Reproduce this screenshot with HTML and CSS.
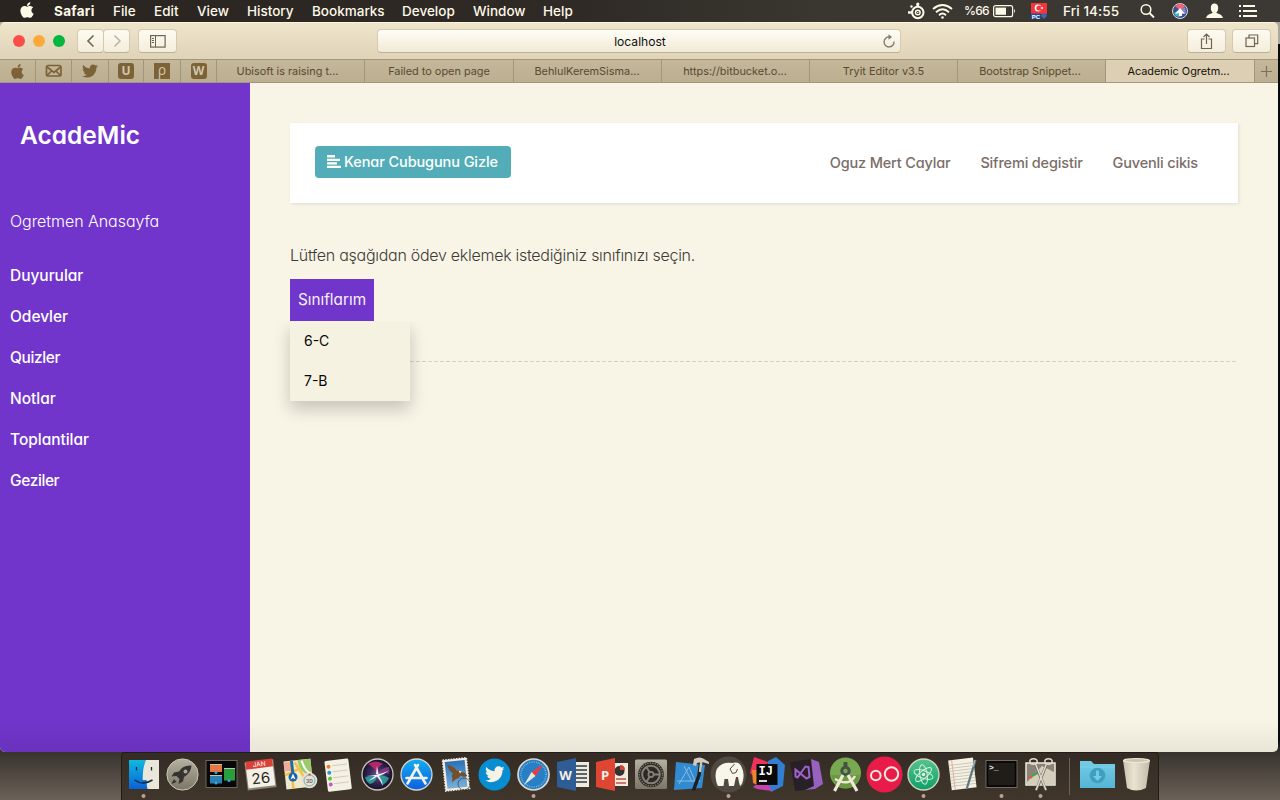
FILE: index.html
```
<!DOCTYPE html>
<html lang="tr">
<head>
<meta charset="utf-8">
<title>Academic Ogretmen</title>
<link rel="stylesheet" href="styles.css">
</head>
<body>
<svg class="defs" width="0" height="0">
  <symbol id="apple" viewBox="0 0 384 512"><path d="M318.7 268.7c-.2-36.7 16.4-64.4 50-84.8-18.8-26.9-47.2-41.7-84.7-44.6-35.5-2.8-74.3 20.7-88.5 20.7-15 0-49.4-19.7-76.4-19.7C63.3 141.2 4 184.8 4 273.5q0 39.3 14.4 81.2c12.8 36.7 59 126.7 107.2 125.2 25.2-.6 43-17.9 75.8-17.9 31.8 0 48.3 17.9 76.4 17.9 48.6-.7 90.4-82.5 102.6-119.3-65.2-30.7-61.7-90-61.7-91.9zm-56.6-164.2c27.3-32.4 24.8-61.9 24-72.5-24.1 1.4-52 16.4-67.9 34.9-17.5 19.8-27.8 44.3-25.6 71.9 26.1 2 49.9-11.4 69.5-34.3z"/></symbol>
  <symbol id="bird" viewBox="0 0 512 512"><path d="M459.37 151.716c.325 4.548.325 9.097.325 13.645 0 138.72-105.583 298.558-298.558 298.558-59.452 0-114.68-17.219-161.137-47.106 8.447.974 16.568 1.299 25.34 1.299 49.055 0 94.213-16.568 130.274-44.832-46.132-.975-84.792-31.188-98.112-72.772 6.498.974 12.995 1.624 19.818 1.624 9.421 0 18.843-1.3 27.614-3.573-48.081-9.747-84.143-51.98-84.143-102.985v-1.299c13.969 7.797 30.214 12.67 47.431 13.319-28.264-18.843-46.781-51.005-46.781-87.391 0-19.492 5.197-37.36 14.294-52.954 51.655 63.675 129.3 105.258 216.365 109.807-1.624-7.797-2.599-15.918-2.599-24.04 0-57.828 46.782-104.934 104.934-104.934 30.213 0 57.502 12.67 76.67 33.137 23.715-4.548 46.456-13.32 66.599-25.34-7.798 24.366-24.366 44.833-46.132 57.827 21.117-2.273 41.584-8.122 60.426-16.243-14.292 20.791-32.161 39.308-52.628 54.253z"/></symbol>
  <defs>
    <linearGradient id="gFinder" x1="0" y1="0" x2="0" y2="1"><stop offset="0" stop-color="#10b9e0"/><stop offset="1" stop-color="#0a62d6"/></linearGradient>
    <linearGradient id="gGray" x1="0" y1="0" x2="0" y2="1"><stop offset="0" stop-color="#b3b1a1"/><stop offset="1" stop-color="#7d7565"/></linearGradient>
    <linearGradient id="gBlue" x1="0" y1="0" x2="0" y2="1"><stop offset="0" stop-color="#12aef0"/><stop offset="1" stop-color="#0b5fe0"/></linearGradient>
    <linearGradient id="gSky" x1="0" y1="0" x2="0" y2="1"><stop offset="0" stop-color="#2a70b8"/><stop offset="1" stop-color="#79afd9"/></linearGradient>
    <linearGradient id="gAtom" x1="0" y1="0" x2="0" y2="1"><stop offset="0" stop-color="#55c58d"/><stop offset="1" stop-color="#0b9f68"/></linearGradient>
    <linearGradient id="gTrash" x1="0" y1="0" x2="1" y2="0"><stop offset="0" stop-color="#c9c1ae"/><stop offset=".4" stop-color="#eae3d2"/><stop offset="1" stop-color="#c3bba8"/></linearGradient>
    <linearGradient id="gFolder" x1="0" y1="0" x2="0" y2="1"><stop offset="0" stop-color="#74cce5"/><stop offset="1" stop-color="#55b5d5"/></linearGradient>
    <radialGradient id="gSiri"><stop offset="0" stop-color="#6a5a9a"/><stop offset=".5" stop-color="#3a2858"/><stop offset="1" stop-color="#12122a"/></radialGradient>
  </defs>
</svg>

<header class="menubar">
  <svg class="i-apple" width="14" height="18" fill="#fdf9e8"><use href="#apple"/></svg>
  <b>Safari</b><span>File</span><span>Edit</span><span>View</span><span>History</span><span>Bookmarks</span><span>Develop</span><span>Window</span><span>Help</span>
  <svg width="18" height="18" viewBox="0 0 18 18" fill="none" stroke="#fdf9e8"><circle cx="9.800" cy="10.500" r="5.700" stroke-width="2"/><circle cx="9.800" cy="10.500" r="2.300" stroke-width="1.500"/><path d="M9.800 5V2.500M0 10.500h4" stroke-width="2.600"/><circle cx="9.800" cy="2" r="1.600" fill="#fdf9e8" stroke="none"/><circle cx="3.500" cy="4.500" r="1.200" fill="#fdf9e8" stroke="none"/><circle cx="9.800" cy="10.500" r=".7" fill="#fdf9e8" stroke="none"/></svg>
  <svg width="22" height="17" viewBox="0 0 22 17" fill="none" stroke="#fdf9e8" stroke-width="1.900"><path d="M1 6Q10.500-1.800 20 6M4 9.200Q10.500 3.400 17 9.200M7 12.200Q10.500 9 14 12.200"/><circle cx="10.500" cy="14.500" r="1.300" fill="#fdf9e8" stroke="none"/></svg>
  <span class="pct">%66</span>
  <svg width="24" height="13" viewBox="0 0 24 13"><rect x=".6" y=".7" width="19" height="11" rx="2" fill="none" stroke="#fdf9e8" stroke-width="1.200"/><rect x="2.500" y="2.600" width="10.500" height="7.200" fill="#fdf9e8"/><path d="M21 4q2 2 0 4z" fill="#fdf9e8"/></svg>
  <svg width="17" height="18" viewBox="0 0 17 18"><rect y="1" width="16" height="11" fill="#f7333b"/><circle cx="7" cy="6" r="3.400" fill="#fff"/><circle cx="8" cy="6" r="2.600" fill="#f7333b"/><path d="M9 6l3-1v2z" fill="#fff"/><rect y="11.500" width="9.500" height="5.500" fill="#214f9e"/><text class="pc" x=".8" y="16.600">PC</text><path d="M13 10.500l3.200 3.200L13 17l-3.200-3.300z" fill="#3f69b2"/></svg>
  <span class="clock">Fri 14:55</span>
  <svg width="15" height="16" viewBox="0 0 15 16" fill="none" stroke="#fdf9e8" stroke-width="1.500"><circle cx="6" cy="6.500" r="4.800"/><path d="M9.500 10L14 14.500" stroke-width="1.800"/></svg>
  <svg width="17" height="18" viewBox="0 0 17 18"><circle cx="8" cy="9" r="7.500" fill="#39508c" stroke="#ddd8d0"/><path d="M3 4q5-5 10 0L9 9z" fill="#ec6677"/><path d="M2 11l6-4v8q-5 0-6-4z" fill="#3bb9c5"/><path d="M13 5l-5 4 6 3z" fill="#7a8de0"/><path d="M8 6l5 6-3-.5V14H7v-3l-4 1z" fill="#fff"/></svg>
  <svg width="18" height="16" viewBox="0 0 18 16" fill="#fdf9e8"><ellipse cx="8.500" cy="5" rx="3.700" ry="4.500"/><path d="M6.500 8h4v2q6 1.500 6.500 5H0q.5-3.500 6.500-5z"/></svg>
  <svg width="19" height="12" viewBox="0 0 19 12" stroke="#fdf9e8" stroke-width="2"><path d="M0 1h2M4 1h12M0 6h2M4 6h14M0 11h2M4 11h14"/></svg>
</header>

<div class="window">
  <div class="toolbar">
    <div class="lights"><i class="red"></i><i class="amber"></i><i class="green"></i></div>
    <div class="nav">
      <button><svg width="10" height="14" fill="none" stroke="#6e6552" stroke-width="1.600"><path d="M7.500 1.500L2 7l5.500 5.500"/></svg></button><button><svg width="10" height="14" fill="none" stroke="#bdb6a4" stroke-width="1.600"><path d="M2.500 1.500L8 7l-5.500 5.500"/></svg></button>
    </div>
    <button class="wide"><svg width="16" height="13" fill="none" stroke="#6e6552"><rect x=".6" y=".6" width="14.500" height="11.500" stroke-width="1.200"/><path d="M5.500 1v11M2 3.500h2M2 5.500h2M2 7.500h2"/></svg></button>
    <div class="url"><span>localhost</span><svg width="14" height="15" fill="none" stroke="#807a6c" stroke-width="1.300"><path d="M7.500 3A5 5 0 1 0 12 7.500"/><path d="M6.500.3L10 3 6.500 5.700z" fill="#807a6c" stroke="none"/></svg></div>
    <button class="wide share"><svg width="14" height="17" fill="none" stroke="#6e6552" stroke-width="1.200"><path d="M4.500 6H1.500v9.500h10V6h-3M6.500 11V1.500M3.500 4l3-3 3 3"/></svg></button>
    <button class="wide"><svg width="14" height="14" fill="none" stroke="#6e6552" stroke-width="1.200"><rect x="1" y="4" width="8.500" height="8.500"/><path d="M4 4V1h8.700v8.700h-3"/></svg></button>
  </div>
  <div class="tabs">
    <span><svg width="13" height="17" fill="#7c6237"><use href="#apple"/></svg></span>
    <span><svg width="18" height="14" fill="none" stroke="#7c6237" stroke-width="1.700"><rect x="1.500" y="1.500" width="14.500" height="10.500" rx="1.800"/><path d="M2 3l7 5.500L15.500 3M2 11.500l5-5M15.500 11.500l-5-5"/></svg></span>
    <span><svg width="16" height="16" fill="#7c6237"><use href="#bird"/></svg></span>
    <span><b class="mark">U</b></span>
    <span><b class="mark square">ρ</b></span>
    <span><b class="mark">W</b></span>
    <span class="first">Ubisoft is raising t...</span>
    <span>Failed to open page</span>
    <span class="mid">BehlulKeremSisma...</span>
    <span class="mid">https://bitbucket.o...</span>
    <span>Tryit Editor v3.5</span>
    <span class="shift">Bootstrap Snippet...</span>
    <span class="active shift">Academic Ogretm...</span>
    <span><svg width="11" height="11" stroke="#7d705a" stroke-width="1.200"><path d="M5.500 0v11M0 5.500h11"/></svg></span>
  </div>
  <div class="page">
    <nav class="sidebar">
      <h1>AcadeMic</h1>
      <p>Ogretmen Anasayfa</p>
      <ul><li>Duyurular</li><li>Odevler</li><li class="tight">Quizler</li><li>Notlar</li><li>Toplantilar</li><li class="tight">Geziler</li></ul>
    </nav>
    <main>
      <div class="navbar">
        <button class="toggle"><svg width="14" height="14" fill="#fff"><path d="M0 0h8v2.500H0zM0 3.700h13v2.300H0zM0 7.200h10v2.300H0zM0 10.700h14V13H0z"/></svg><span>Kenar Cubugunu Gizle</span></button>
        <div class="links"><a>Oguz Mert Caylar</a><a>Sifremi degistir</a><a>Guvenli cikis</a></div>
      </div>
      <p class="lead">Lütfen aşağıdan ödev eklemek istediğiniz sınıfınızı seçin.</p>
      <div class="dropdown">
        <button class="drop"><span>Sınıflarım</span></button>
        <div class="menu"><a>6-C</a><a>7-B</a></div>
      </div>
      <div class="line"></div>
    </main>
  </div>
</div>

<footer class="dock">
  <svg viewBox="0 0 39 48"><rect x="5" y="8" width="30" height="29" fill="url(#gFinder)"/><path d="M22 8h13v29H23.500q-1-4-.8-9h-4Q18.500 16 22 8z" fill="#e9e6da"/><path d="M12.500 15v3.500M27.500 15v3.500" stroke="#172b3c" stroke-width="1.300"/><path d="M10.500 28q8.500 6 18 0" fill="none" stroke="#172b3c" stroke-width="1.500"/><circle class="dot" cx="19.500" cy="44" r="2"/></svg>
  <svg viewBox="0 0 39 48"><circle cx="19.500" cy="22.500" r="15.600" fill="url(#gGray)" stroke="#ccc8ba"/><path d="M28.500 13.500q-9-.5-12.500 6l-5 1-2.500 4 5-.5 3 3-1 5 4.500-2.500 1-4.500q7-4 7.500-11.500zM11 27l-2.500 5 5-2z" fill="#35332f"/><circle cx="22.500" cy="19.500" r="2" fill="#aaa798"/></svg>
  <svg viewBox="0 0 39 48"><rect x="4" y="8.500" width="31" height="27" fill="#080808" stroke="#6c665b"/><path d="M8 12h12v8H8z" fill="#e6793f"/><path d="M8 23h12v8.500H8z" fill="#2d7fb0"/><path d="M22 16h11v12.500H22z" fill="#2a9d3c"/><path d="M8 12h12v1H8zM8 23h12v1H8zM22 16h11v1H22z" fill="#bcc7ac"/><g fill="#3b9eea"><circle cx="14" cy="20.500" r="1.500"/><circle cx="14" cy="31" r="1.500"/><circle cx="27" cy="28.500" r="1.500"/></g></svg>
  <svg viewBox="0 0 39 48"><g transform="rotate(-7 19 23)"><rect x="5" y="9" width="29" height="28" fill="#8a8477"/><rect x="6" y="9" width="27" height="26" fill="#f3f0e5"/><rect x="6" y="8" width="27" height="8" fill="#d94138"/><text class="cal-m" x="19.500" y="14.500">JAN</text><text class="cal-d" x="19.500" y="31.500">26</text></g></svg>
  <svg viewBox="0 0 39 48"><g transform="rotate(-6 19 23)"><rect x="5" y="8" width="27" height="28" fill="#eee8cc"/><path d="M19 8h13v17Q19 22 19 8z" fill="#9ccb6c"/><path d="M5 9h7v9H5z" fill="#efac9a"/><path d="M12 8v28M16 10l12 24M5 22l14-5" stroke="#f2c146" stroke-width="2.500"/><path d="M13 8v14" stroke="#2668aa" stroke-width="3"/><path d="M23 9q3 13 9 14" stroke="#fff" stroke-width="2" fill="none"/></g><circle cx="13" cy="25" r="4.500" fill="#1765b0"/><path d="M13 21.500l2.500 6-2.500-1.500-2.500 1.500z" fill="#fff"/><circle cx="29.500" cy="28.500" r="7.800" fill="#e5e2d8"/><circle cx="29.500" cy="28.500" r="5.500" fill="none" stroke="#86a4a5"/><text class="tiny" x="29.500" y="30.500">3D</text><circle cx="29.500" cy="22.500" r="1.100" fill="#f13434"/></svg>
  <svg viewBox="0 0 39 48"><g transform="rotate(-7 20 22)"><rect x="7" y="7.500" width="24" height="31" rx="1.500" fill="#f4f0e2"/><path d="M14 13h15M14 19h15M14 25h15M14 31h15" stroke="#cac5b8" stroke-width=".8"/><circle cx="10.500" cy="13.500" r="2" fill="#f27830"/><circle cx="10.500" cy="19.500" r="2" fill="#2595dc"/><circle cx="10.500" cy="25.500" r="2" fill="#5ac83b"/><circle cx="10.500" cy="31.500" r="2" fill="#c35ac8"/></g></svg>
  <svg viewBox="0 0 39 48"><circle cx="19.500" cy="22.500" r="15.500" fill="url(#gSiri)" stroke="#cdc5bb" stroke-width="1.300"/><path d="M10 12q8-5 15 0-6 2-6 10-2-6-9-10z" fill="#c72a6e" opacity=".85"/><path d="M20 22q4-7 11-7 1 4 0 7-5-2-11 0z" fill="#8e3d8c" opacity=".8"/><path d="M7 25q7-2 12-2-1 8-7 9-4-2-5-7zM19 23q8 0 12 3-2 5-7 7-2-6-5-10z" fill="#2fb9ae" opacity=".75"/><path d="M8 23q6 1 11-.5 6-1 12-4-5 4-10 5.500 3 4 4 10-3-6-6-9.500-4 3-9 4.500 5-3 7-5-5 0-9-1zM18 22l1-8 1.500 8z" fill="#f5f1f6"/></svg>
  <svg viewBox="0 0 39 48"><circle cx="19.500" cy="22.500" r="15.500" fill="url(#gBlue)" stroke="#d6d5cc" stroke-width="1.300"/><path d="M21 13l-9 16M18 13l9 16M9.500 26h14M25.500 26h4M27 29l1.500 2.500M12 29l-1.500 2.500" fill="none" stroke="#f3f0e6" stroke-width="2.600" stroke-linecap="round"/></svg>
  <svg viewBox="0 0 39 48"><g transform="rotate(-6 19 22)"><rect x="8" y="7" width="24" height="31" fill="#f2eddf" stroke="#f2eddf" stroke-width="1.500" stroke-dasharray="1.500 1.200"/><rect x="10" y="9" width="20" height="27" fill="url(#gSky)"/><path d="M12 12q7 2 9 7 4-1 5 2 3 0 5 4-3 2-7-1-1 3-4 3l-5 3 1-4q-1-3 1-5-4-3-5-9z" fill="#73502b"/><path d="M23 19l3 1-2 2z" fill="#f3ead4"/></g><circle cx="28" cy="32" r="6" fill="none" stroke="#3339" stroke-width="1"/></svg>
  <svg viewBox="0 0 39 48"><circle cx="19.500" cy="22.500" r="16" fill="#088dd2"/><svg x="10" y="12.500" width="19.500" height="19.500" fill="#f6f2e6"><use href="#bird"/></svg></svg>
  <svg viewBox="0 0 39 48"><circle cx="19.500" cy="22.500" r="15.500" fill="#287fc6" stroke="#dcd8cb" stroke-width="1.700"/><circle cx="19.500" cy="22.500" r="12.500" fill="none" stroke="#8cc8e7" stroke-width="1.500" stroke-dasharray=".6 1.200"/><path d="M29.500 12l-8 12-4-4z" fill="#ee3b39"/><path d="M10 33l7.500-13 4 4z" fill="#e8e5dd"/><circle class="dot" cx="19.500" cy="44" r="2"/></svg>
  <svg viewBox="0 0 39 48"><rect x="20" y="10" width="16" height="25" fill="#eeeadd"/><path d="M23 14h11M23 18h11M23 22h11M23 26h11M23 30h11" stroke="#2d3947" stroke-width="1.500"/><path d="M4 10l19-4v33L4 35z" fill="#2e5c94"/><text class="office" x="12.500" y="27.500">W</text></svg>
  <svg viewBox="0 0 39 48"><rect x="20" y="11" width="16" height="23" fill="#eeeadd"/><circle cx="27.500" cy="19" r="5" fill="#333"/><path d="M28 18v-5q5 0 5 5z" fill="#d24532"/><path d="M24 27h10M24 31h10" stroke="#bd5546" stroke-width="1.500"/><path d="M4 10l19-4v33L4 35z" fill="#de4633"/><text class="office" x="13" y="27.500">P</text></svg>
  <svg viewBox="0 0 39 48"><rect x="4" y="7.500" width="32" height="29.500" rx="1.500" fill="url(#gGray)"/><circle cx="20" cy="22.500" r="12.800" fill="#2b2926"/><circle cx="20" cy="22.500" r="8.800" fill="none" stroke="#888173" stroke-width="2"/><circle cx="20" cy="22.500" r="11.500" fill="none" stroke="#888173" stroke-width="1.300" stroke-dasharray="1.300 1.200"/><circle cx="20" cy="22.500" r="2.600" fill="none" stroke="#888173" stroke-width="1.800"/><path d="M23 22.500h6M18.500 20l-3.500-5.500M18.500 25l-3.500 5.500" stroke="#888173" stroke-width="2"/></svg>
  <svg viewBox="0 0 39 48"><path d="M6 10l29 3-3 23-28 2z" fill="#328bd0"/><path d="M9 32l10-17 8 19M7 29h23M14 14l8 16" stroke="#88bddd" stroke-width="1" fill="none"/><path d="M30.500 12L29 23l-5 14" fill="none" stroke="#1d2021" stroke-width="3.500" stroke-linecap="round"/><path d="M31.500 8l-1.500 12" stroke="#c9c6ba" stroke-width="2.500"/><path d="M24 7q6-3 10 0l5 3v2l-7-2-5 1-1 3-3-1z" fill="#d1cec1"/></svg>
  <svg viewBox="0 0 39 48"><circle cx="19.500" cy="22.500" r="18" fill="#504941"/><path d="M6.500 24q0-9 7-12 4-2 10-1 7-2 9.500 5 2 4 1.500 9-.5 7-3.500 9-1.500-5-2-9h-2l-2 9h-5l-1-7-3.500 0-1 7h-5.500q-2-3-2.500-10z" fill="#f8f5eb"/><path d="M25.500 12l-4.500 5 2.500 4.500 3.500-1 1.500-3.500" fill="none" stroke="#504941" stroke-width="1"/><circle class="dot" cx="19.500" cy="44" r="2"/></svg>
  <svg viewBox="0 0 39 48"><path d="M6 5l14 5-8 20-10-9z" fill="#ef315b"/><path d="M4 18h10v17l-9-4z" fill="#ed8433"/><path d="M20 9l8-4 9 8-2 21-12 6-5-10z" fill="#327ed0"/><path d="M5 35l10-8 10 12-16-2z" fill="#c743ad"/><rect x="8.500" y="12" width="21" height="21" fill="#090909"/><text class="ij" x="10.500" y="23">IJ</text><path d="M11 29h8" stroke="#fff" stroke-width="1.700"/></svg>
  <svg viewBox="0 0 39 48"><path d="M3 10l21-3 4 30-20 2z" fill="#272127"/><path d="M24 7l8 3 4 22-8 5-10 1 9-4z" fill="#9761bf"/><path d="M8.500 17.500l11 9 3-1.500-1-10-3-.5-8 11-2-1z" fill="none" stroke="#a660ce" stroke-width="2"/></svg>
  <svg viewBox="0 0 39 48"><circle cx="19.500" cy="21" r="15.500" fill="#78a950"/><path d="M5 23h29q-2 11-14.500 13.500Q7 34 5 23z" fill="#699a42"/><circle cx="19.500" cy="19" r="3.700" fill="none" stroke="#455347" stroke-width="3"/><path d="M19.500 10v6" stroke="#455347" stroke-width="4"/><path d="M17 23L8.500 39M22 23l9 16" stroke="#eee8d5" stroke-width="3.200"/><path d="M9 27q14 8 20-3" stroke="#eee8d5" stroke-width="2.500" fill="none"/></svg>
  <svg viewBox="0 0 39 48"><circle cx="19.500" cy="22.500" r="18" fill="#e91c49"/><g fill="none" stroke="#f5eadd" stroke-width="2"><circle cx="10.800" cy="23.500" r="4.800"/><circle cx="26.500" cy="22" r="6.700"/></g></svg>
  <svg viewBox="0 0 39 48"><circle cx="19.500" cy="22.500" r="15.500" fill="url(#gAtom)" stroke="#d6d2c4" stroke-width="1.400"/><g fill="none" stroke="#dceedc" stroke-width="1"><ellipse cx="19.500" cy="22.500" rx="10" ry="3.700" transform="rotate(20 19.500 22.500)"/><ellipse cx="19.500" cy="22.500" rx="10" ry="3.700" transform="rotate(80 19.500 22.500)"/><ellipse cx="19.500" cy="22.500" rx="10" ry="3.700" transform="rotate(140 19.500 22.500)"/></g><circle cx="19.500" cy="22.500" r="1.700" fill="#e8f2e4"/><circle class="dot" cx="19.500" cy="44" r="2"/></svg>
  <svg viewBox="0 0 39 48"><g transform="rotate(-7 19 23)"><rect x="7" y="7" width="25" height="30" fill="#f5f1e2"/><path d="M7 12h25M7 15h25M7 18h25M7 21h25M7 24h25M7 27h25M7 30h25M7 33h25" stroke="#bcb9ad" stroke-width=".7"/><path d="M10.500 7v30" stroke="#e7aaa0"/></g><path d="M32.500 8L24 36" stroke="#5c7585" stroke-width="2.200"/><path d="M32 8l-2 7" stroke="#adc0c7"/></svg>
  <svg viewBox="0 0 39 48"><rect x="4" y="8.500" width="31" height="27" fill="#201c17" stroke="#6f6b62"/><rect x="5.500" y="10" width="28" height="24" fill="none" stroke="#050505" stroke-width="1.500"/><text class="term" x="7" y="17.500">&gt;_</text><circle class="dot" cx="19.500" cy="44" r="2"/></svg>
  <svg viewBox="0 0 39 48"><rect x="5" y="11" width="29" height="22" fill="#8b8377" stroke="#efebe0" stroke-width="1.500"/><path d="M6 30l15-16 12 6v12H6z" fill="#d5cebd"/><path d="M11 24l7-4" stroke="#47a34b" stroke-width="2.500"/><circle cx="10" cy="25" r="1.500" fill="#e75938"/><g fill="none" stroke="#6d655b" stroke-width="2.600"><path d="M14.500 12.500l10.500 26M25.500 12.500l-10.500 26"/></g><g fill="none" stroke="#e2dccd" stroke-width="1.500"><ellipse cx="12.500" cy="9.500" rx="3.700" ry="2.800"/><ellipse cx="27.500" cy="9.500" rx="3.700" ry="2.800"/><path d="M14.500 12l10.500 26M25.500 12l-10.500 26"/></g><circle class="dot" cx="19.500" cy="44" r="2"/></svg>
  <i class="sep"></i>
  <svg viewBox="0 0 39 48"><path d="M2 9h11l3 3h21v24H2z" fill="url(#gFolder)"/><path d="M2 15h35" stroke="#83d2e8" stroke-width=".8"/><circle cx="19.500" cy="23.500" r="7.800" fill="#3f9fbe"/><path d="M19.500 18.500v8" fill="none" stroke="#73cde6" stroke-width="2.800"/><path d="M15 24h9l-4.500 5z" fill="#73cde6"/></svg>
  <svg viewBox="0 0 39 48"><path d="M6 8l4 28q9 5 19 0l4-28z" fill="url(#gTrash)"/><ellipse cx="19.500" cy="8.500" rx="13" ry="2" fill="#cdc4b2" stroke="#eee7d6" stroke-width="1.200"/></svg>
</footer>
</body>
</html>
```
FILE: styles.css
```
* { box-sizing: border-box; }
body { margin: 0; width: 1280px; height: 800px; overflow: hidden; display: flex; flex-direction: column; font-family: Inter, "Liberation Sans", sans-serif; background: linear-gradient(#000 0 22px, #aaa89e 22px 44px, #080a0d 44px 740px, #38332e 752px, #6b6258 800px); }
.defs { position: absolute; }
svg { display: block; }
button { font: inherit; padding: 0; margin: 0; border: 0; }

.menubar { height: 22px; flex: none; padding-left: 20px; display: grid; align-items: center; grid-template-columns: 34px 59px 41px 43px 50px 65px 90px 71px 70px 365px 24px 32px 29px 38px 32px 77px 32px 34px 33px 19px; background: linear-gradient(90deg, #292420, #2f2a25 45%, #3a3731 65%, #3c3934); color: #fdf9e8; font-size: 13.500px; font-weight: 500; line-height: 22px; white-space: nowrap; }
.menubar b { font-weight: 700; letter-spacing: .3px; }
.menubar .i-apple { margin-top: -3px; }
.pct { font-size: 12px; font-weight: 500; letter-spacing: -.7px; }
.clock { font-size: 13.500px; letter-spacing: .1px; }
.pc { font: bold 6px "Liberation Sans", sans-serif; fill: #fff; }

.window { width: 1278px; height: 730px; flex: none; display: flex; flex-direction: column; border-radius: 5px; overflow: hidden; }
.toolbar { height: 37px; flex: none; padding: 0 0 0 13px; display: grid; align-items: center; grid-template-columns: 64px 61px 239px 524px 286px 45px 39px; background: linear-gradient(#efe5cb, #dfd3b8); border-top: 1px solid #fbf5e0; }
.lights { display: flex; gap: 8px; }
.lights i { width: 12px; height: 12px; border-radius: 50%; }
.red { background: #fc4e48; } .amber { background: #fda93a; } .green { background: #04b73f; }
.nav { display: flex; }
.toolbar button { display: flex; align-items: center; justify-content: center; width: 27px; height: 24px; border: 1px solid #d5c9af; border-bottom-color: #bdb198; border-radius: 4px; background: linear-gradient(#fdfbf1, #f3eddb); }
.toolbar .nav button + button { margin-left: -1px; }
.toolbar .wide { width: 39px; }
.toolbar .share { grid-column: 6; }
.url { height: 24px; display: flex; align-items: center; justify-content: center; border: 1px solid #d5c9af; border-bottom-color: #bdb198; border-radius: 4px; background: linear-gradient(#fffef6, #f0e9d5); font-size: 12.100px; color: #111; }
.url span { flex: 1; text-align: center; padding-left: 20px; }
.url svg { margin-right: 4px; }
.toolbar .url { grid-column: 4; }
.tabs { height: 24px; flex: none; display: grid; grid-template-columns: 36px 36px 37px 35px 37px 36px 148px 149px 148px 148px 148px 148px 149px 23px; background: linear-gradient(#c4b79a, #bbae91); border-top: 1px solid #a39779; border-bottom: 1px solid #a39779; font-size: 10.900px; color: #594a30; }
.tabs span { display: flex; align-items: center; justify-content: center; border-right: 1px solid #a1967b; white-space: nowrap; }
.tabs span:last-child { border: 0; }
.tabs .first { padding-right: 6px; }
.tabs .shift { padding-right: 3px; }
.tabs .mid { padding-right: 1px; }
.tabs .active { background: #dccfb3; color: #15110a; }
.mark { width: 16px; height: 16px; border-radius: 3px; background: #7c6237; color: #d2c6aa; font: bold 12px/16px "Open Sans", sans-serif; text-align: center; }
.mark.square { border-radius: 0; font-size: 14px; line-height: 14px; font-weight: 400; }

.page { flex: 1; display: flex; background: linear-gradient(#0000 calc(100% - 32px), #00000010), #f8f5e6; font-feature-settings: "cv11"; }
.sidebar { width: 250px; flex: none; color: #fff; background: linear-gradient(#0000 calc(100% - 32px), #00000010), #7135cb; }
.sidebar h1 { margin: 34px 0 0 20px; font-size: 24.500px; line-height: 36px; font-weight: 600; letter-spacing: 0; }
.sidebar p { margin: 56px 0 0 10px; font-size: 16px; line-height: 24px; font-weight: 350; letter-spacing: -.05px; }
.sidebar ul { list-style: none; margin: 22px 0 0; padding: 0 0 0 10px; }
.sidebar li { height: 41px; line-height: 41px; font-size: 15.500px; font-weight: 500; letter-spacing: -.03px; }
.sidebar .tight { letter-spacing: -.4px; }
main { width: 1028px; padding: 40px 40px 0; color: #403a37; }
.navbar { height: 80px; display: flex; justify-content: space-between; padding: 0 40px 0 25px; background: #fff; box-shadow: 1px 1px 3px #0000001a; }
.toggle { display: flex; align-items: center; gap: 3px; width: 196px; height: 32px; margin-top: 23px; padding: 0 0 1px 12px; border-radius: 4px; background: #52adb8; color: #fff; font-size: 14.500px; font-weight: 500; letter-spacing: -.1px; white-space: nowrap; }
.links { display: flex; gap: 30px; align-items: center; padding-bottom: 2px; font-size: 14.500px; font-weight: 500; letter-spacing: -.17px; color: #7a6e68; white-space: nowrap; }
.lead { margin: 40px 0 0; font-size: 16px; line-height: 24px; font-weight: 350; letter-spacing: -.28px; white-space: nowrap; }
.dropdown { position: relative; margin-top: 12px; width: 84px; }
.drop { display: block; width: 84px; height: 42px; padding-bottom: 2px; background: #7035cb; color: #f7f1f5; font-size: 15.300px; font-weight: 400; }
.menu { position: absolute; top: 42px; left: 0; width: 120px; height: 80px; background: #f6f2e2; box-shadow: 0 8px 16px #00000033; clip-path: inset(0 -30px -30px -30px); color: #080808; }
.menu a { display: block; height: 40px; padding-left: 14px; line-height: 40px; font-size: 14px; }
.line { margin-top: 40px; height: 1px; background: repeating-linear-gradient(90deg, #d6d3c4 0 4px, #0000 4px 6px); }

.dock { width: 1038px; height: 48px; flex: none; margin-left: 121px; padding-left: 1.500px; display: flex; background: linear-gradient(#342c25, #40362b); border: solid #211c18; border-width: 1px 1px 0; border-radius: 4px 4px 0 0; }
.dock > svg { width: 39px; height: 48px; flex: none; margin-top: -1px; overflow: visible; }
.dot { fill: #baa391; }
.sep { width: 1px; height: 37px; margin: 5px 8.500px 0 9px; background: #6d6254; }
.cal-m { font: 6.500px Inter, sans-serif; fill: #fff; text-anchor: middle; }
.cal-d { font: 15px Inter, sans-serif; fill: #292724; text-anchor: middle; }
.tiny { font: bold 5px Inter, sans-serif; fill: #6d7170; text-anchor: middle; }
.office { font: bold 13px "Open Sans", sans-serif; fill: #f3efe4; text-anchor: middle; }
.ij { font: bold 12px "Liberation Mono", monospace; fill: #fff; }
.term { font: bold 8px "Liberation Mono", monospace; fill: #eee; }
```
